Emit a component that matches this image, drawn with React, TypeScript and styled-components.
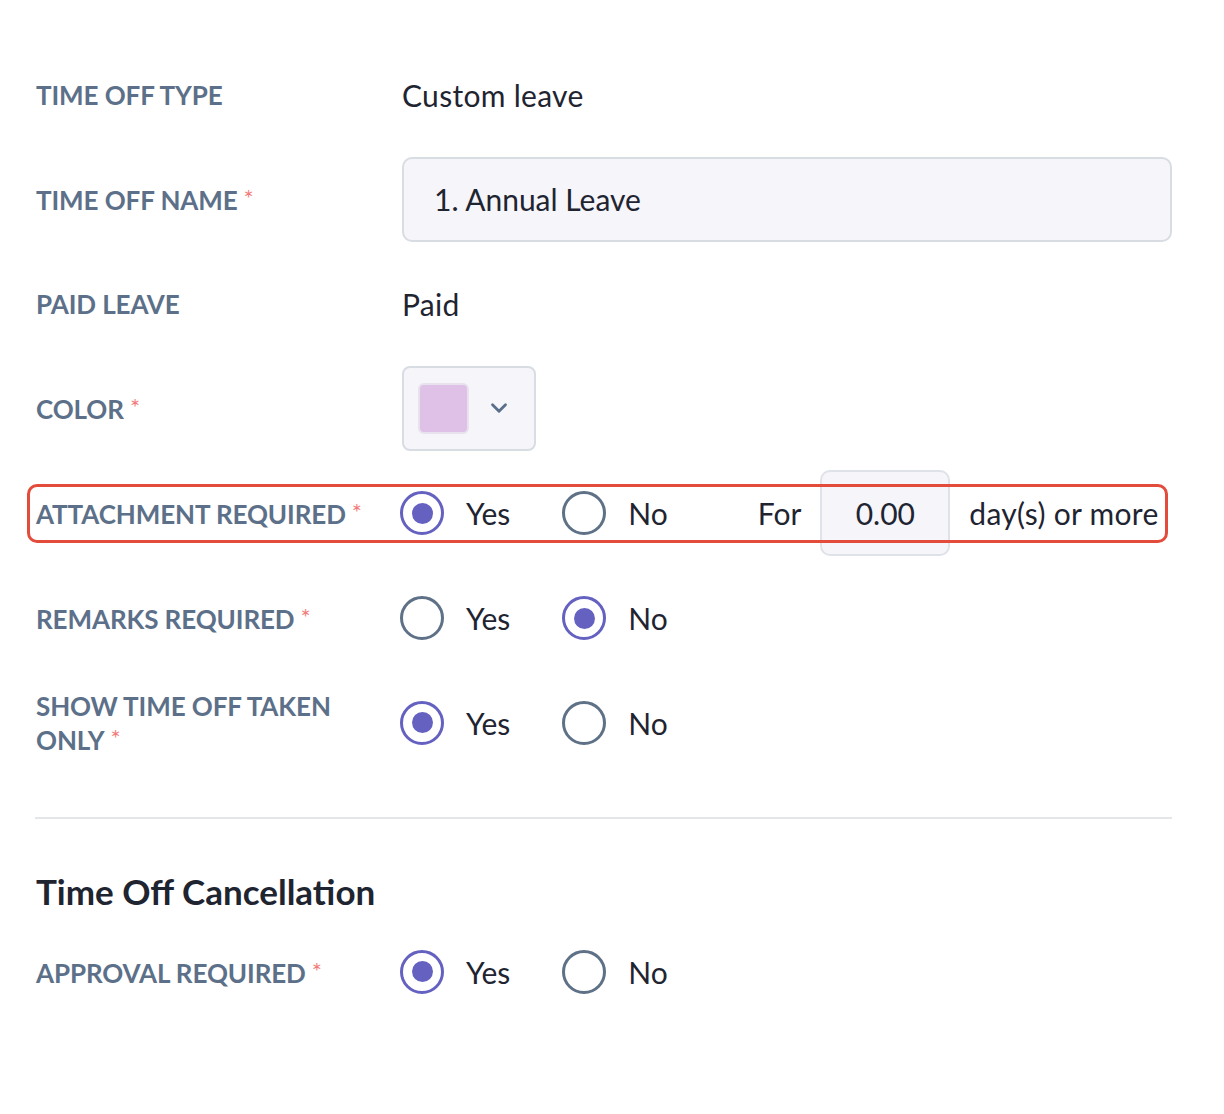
import styled, { createGlobalStyle } from "styled-components";

const GlobalStyle = createGlobalStyle`
  body {
    margin: 0;
    background: #ffffff;
    font-family: Lato, "Open Sans", sans-serif;
  }
`;

type Option = { label: string; checked: boolean };

const yesNo = (yes: boolean): Option[] => [
  { label: "Yes", checked: yes },
  { label: "No", checked: !yes },
];

function Radios({ options }: { options: Option[] }) {
  return (
    <RadioGroup>
      {options.map((o) => (
        <RadioItem key={o.label}>
          <RadioCircle $checked={o.checked} />
          <RadioText>{o.label}</RadioText>
        </RadioItem>
      ))}
    </RadioGroup>
  );
}

function FieldLabel({ text, required }: { text: React.ReactNode; required?: boolean }) {
  return (
    <Label>
      {text}
      {required && <Star>*</Star>}
    </Label>
  );
}

export default function App() {
  return (
    <>
      <GlobalStyle />
      <Page>
        <Form>
          <Row>
            <FieldLabel text="Time off type" />
            <Value>Custom leave</Value>
          </Row>
          <Row>
            <FieldLabel text="Time off name" required />
            <TextInput>1. Annual Leave</TextInput>
          </Row>
          <Row>
            <FieldLabel text="Paid leave" />
            <Value>Paid</Value>
          </Row>
          <Row>
            <FieldLabel text="Color" required />
            <ColorSelect>
              <Swatch $color="#dfc1e7" />
              <svg width="26" height="26" viewBox="0 0 24 24" fill="none">
                <path d="M6 9l6 6 6-6" stroke="#5a6f8a" strokeWidth="2.6" strokeLinecap="round" strokeLinejoin="round" />
              </svg>
            </ColorSelect>
          </Row>
          <Row>
            <Highlight />
            <FieldLabel text="Attachment required" required />
            <Inline>
              <Radios options={yesNo(true)} />
              <ForText>For</ForText>
              <SmallInput>0.00</SmallInput>
              <Value>day(s) or more</Value>
            </Inline>
          </Row>
          <Row>
            <FieldLabel text="Remarks required" required />
            <Radios options={yesNo(false)} />
          </Row>
          <Row>
            <FieldLabel text={<>Show time off taken<br />only</>} required />
            <Radios options={yesNo(true)} />
          </Row>
        </Form>
        <Divider />
        <SectionTitle>Time Off Cancellation</SectionTitle>
        <Form>
          <Row>
            <FieldLabel text="Approval required" required />
            <Radios options={yesNo(true)} />
          </Row>
        </Form>
      </Page>
    </>
  );
}

const Page = styled.div`
  width: 1136px;
  padding: 52px 0 80px 36px;
  box-sizing: content-box;
`;

const Form = styled.div`
  display: flex;
  flex-direction: column;
  gap: 19.5px;
`;

const Row = styled.div`
  position: relative;
  display: grid;
  grid-template-columns: 366px 1fr;
  align-items: center;
  min-height: 85px;
`;

const Highlight = styled.div`
  position: absolute;
  left: -9px;
  right: 4px;
  top: 14px;
  height: 59px;
  border: 3px solid #e34b3b;
  border-radius: 10px;
  box-sizing: border-box;
  pointer-events: none;
`;

const Label = styled.div`
  font-size: 26px;
  font-weight: 700;
  line-height: 32px;
  color: #5c7089;
  text-transform: uppercase;
  letter-spacing: -0.1px;
`;

const Star = styled.span`
  color: #f27c7c;
  font-size: 24px;
  font-weight: 400;
  margin-left: 6px;
  vertical-align: 3px;
`;

const Value = styled.div`
  font-size: 30px;
  color: #1f2431;
  letter-spacing: 0.3px;
`;

const TextInput = styled.div`
  height: 85px;
  box-sizing: border-box;
  display: flex;
  align-items: center;
  padding-left: 30px;
  background: #f5f5fa;
  border: 2px solid #d8dce3;
  border-radius: 10px;
  font-size: 30px;
  color: #1f2431;
`;

const ColorSelect = styled.div`
  width: 134px;
  height: 85px;
  box-sizing: border-box;
  display: flex;
  align-items: center;
  gap: 17px;
  padding-left: 14px;
  background: #f5f5fa;
  border: 2px solid #d8dce3;
  border-radius: 8px;
`;

const Swatch = styled.div<{ $color: string }>`
  width: 51px;
  height: 51px;
  border-radius: 6px;
  background: ${(p) => p.$color};
  border: 2px solid #e8e1ee;
  box-sizing: border-box;
`;

const Inline = styled.div`
  display: flex;
  align-items: center;
`;

const ForText = styled.div`
  font-size: 30px;
  color: #1f2431;
  margin-left: 90px;
  margin-right: 19px;
`;

const SmallInput = styled.div`
  width: 130px;
  height: 86px;
  box-sizing: border-box;
  display: flex;
  align-items: center;
  justify-content: center;
  background: #f5f5fa;
  border: 2px solid #dfe2e8;
  border-radius: 10px;
  font-size: 30px;
  color: #1f2431;
  margin-right: 19px;
`;

const RadioGroup = styled.div`
  display: flex;
  align-items: center;
  gap: 52px;
  margin-left: -2px;
`;

const RadioItem = styled.label`
  display: flex;
  align-items: center;
  gap: 22px;
`;

const RadioCircle = styled.span<{ $checked: boolean }>`
  width: 44px;
  height: 44px;
  box-sizing: border-box;
  border-radius: 50%;
  border: 3.5px solid ${(p) => (p.$checked ? "#6461c1" : "#5e7187")};
  display: flex;
  align-items: center;
  justify-content: center;
  &::after {
    content: "";
    width: 21px;
    height: 21px;
    border-radius: 50%;
    background: ${(p) => (p.$checked ? "#6461c1" : "transparent")};
  }
`;

const RadioText = styled.span`
  font-size: 30px;
  color: #1f2431;
`;

const Divider = styled.div`
  height: 2px;
  background: #e4e6ea;
  margin: 52px 0 0 -1px;
`;

const SectionTitle = styled.h2`
  margin: 50px 0 16px;
  font-size: 35px;
  font-weight: 700;
  color: #1f2431;
  line-height: 44px;
`;
